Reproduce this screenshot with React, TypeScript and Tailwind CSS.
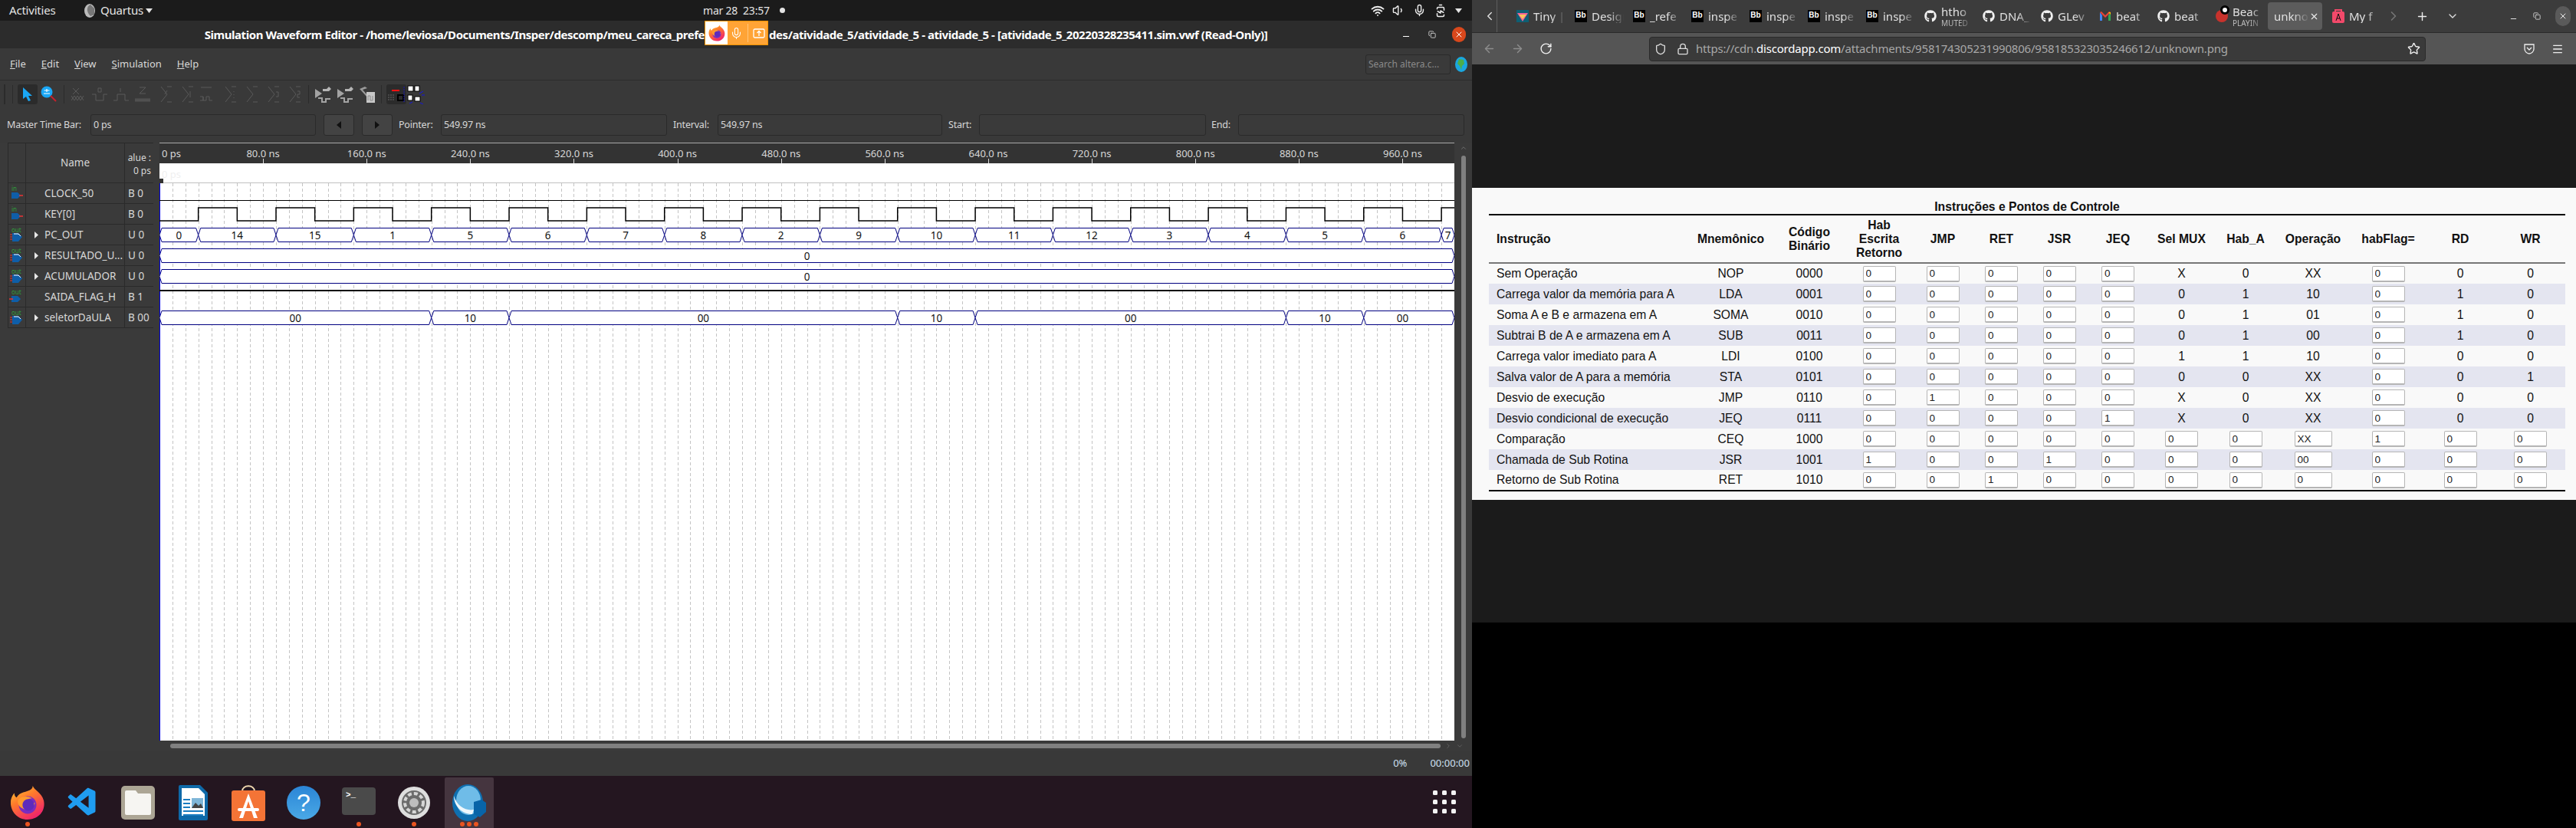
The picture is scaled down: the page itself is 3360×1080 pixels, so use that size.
import React from "react";
import { Wifi, Volume1, Mic, BatteryCharging, Minus, Plus, X, Star, Shield, Lock, Menu, ArrowLeft, ArrowRight, RotateCw, ChevronLeft, ChevronRight, ChevronDown, ChevronUp, Copy } from "lucide-react";
import { FaGithub } from "react-icons/fa";
import { VscVscode } from "react-icons/vsc";

const ui = "font-['Noto_Sans',sans-serif]";

const Firefox = ({ size = 24 }: { size?: number }) => (
  <svg width={size} height={size} viewBox="0 0 48 48">
    <defs>
      <linearGradient id="fx" x1="0" y1="0" x2="0.6" y2="1">
        <stop offset="0" stopColor="#ffd23a" />
        <stop offset="0.45" stopColor="#ff7a2b" />
        <stop offset="1" stopColor="#f0256a" />
      </linearGradient>
    </defs>
    <path d="M31 1c2 6 12 9 15 20 3 14-7 26-22 26C10 47 1 36 1 24c0-6 3-11 5-13 0 3 1 5 3 6 2-4 6-6 9-7 6-2 13-3 13-9z" fill="url(#fx)" />
    <circle cx="24" cy="27" r="12" fill="#7b2cbf" />
    <path d="M11 20c4-5 13-6 19-2-5 0-8 3-8 6 3 2 9 1 12 0-1 6-7 11-14 9-6-2-11-7-9-13z" fill="#ff9a2e" />
    <circle cx="25" cy="27" r="8" fill="#5d2bbd" />
  </svg>
);

// disabled wave buttons of the toolbar
const btnShapes = [
  "M4 4l8 8M12 4l-8 8M2 14l4 6 4-6 4 6 4-6M2 20l4-6 4 6 4-6 4 6",
  "M1 12h5v8h10v-8h5M9 4h4v5h-4z",
  "M1 20h5v-8h10v8h5M10 4v5",
  "M1 18h20M1 21h20M1 19.500h20M7 3h8l-8 8h8",
  "M7 2l8 10-8 10M15 2h6M15 22h6M12 12l3-5",
  "M7 2l8 10-8 10M15 2h6M15 22h6M17 8v8",
  "M3 3h14M2 15h4v5h4v-5h4v5h4M2 20h4v-5",
  "M7 2l8 10-8 10M15 2h6M15 22h6M18 8v1M18 12v1M18 16v1",
  "M7 2l8 10-8 10M15 2h6M15 22h6",
  "M7 2l8 10-8 10M15 2h6M15 22h6M17 9h3v6h-3",
  "M7 2l8 10-8 10M15 2h6M15 22h6M17 8h3v4h-3v4h3",
];

const Sep = ({ x }: { x: string }) => <div className={`w-px h-[24px] bg-[#2b2b2b] ${x}`} />;

const Toolbar = () => (
  <div className="h-[35px] flex items-center bg-[#393939]">
    <div className="ml-[5px] w-[2px] h-[26px] bg-[#2b2b2b]" />
    <Sep x="ml-[9px]" />
    <div className="ml-[6px] w-[26px] h-[26px] bg-[#2b2b2b] rounded-[3px] flex items-center justify-center">
      <svg width="16" height="20" viewBox="0 0 16 20"><path d="M2 1v15l4-3 3 6 3-1-3-6h5z" fill="#1aa7f5" /></svg>
    </div>
    <svg className="ml-[4px]" width="22" height="22" viewBox="0 0 22 22">
      <circle cx="8" cy="8" r="7.500" fill="#1aa7f5" />
      <path d="M4 10h8M8 4v4M4.500 6h7" stroke="#fff" strokeWidth="1.200" />
      <path d="M13 13l7 7" stroke="#c8202c" strokeWidth="2" />
    </svg>
    <Sep x="ml-[8px]" />
    <div className="ml-[7px] flex gap-[4px]">
      {btnShapes.map((d, i) => (
        <svg key={i} width="24" height="24" viewBox="0 0 24 24" fill="none" stroke="#5a5a5a" strokeWidth="1">
          <path d={d} />
        </svg>
      ))}
    </div>
    <Sep x="ml-[7px]" />
    <div className="ml-[6px] flex gap-[5px]">
      {[0, 1].map((i) => (
        <svg key={i} width="24" height="24" viewBox="0 0 24 24">
          <path d="M2 5l9 6-9 6z" fill="#a3a3a3" />
          <path d="M12 5h5l3-3 3 3-3 3h-8z" fill="#b5b5b5" />
          <path d="M6 17h5v5h5v-4h6" fill="none" stroke="#a3a3a3" strokeWidth="2" />
        </svg>
      ))}
      <svg width="24" height="24" viewBox="0 0 24 24">
        <path d="M2 5l7-3 3 2-6 2 8 9-2 1-8-9z" fill="#9a9a9a" />
        <rect x="11" y="9" width="11" height="14" fill="#c8c8c8" />
        <path d="M13 20v-6h3v6h3v-6" fill="none" stroke="#8a8a8a" />
      </svg>
    </div>
    <Sep x="ml-[6px]" />
    <div className="ml-[6px] w-[26px] h-[26px] bg-[#2b2b2b] rounded-[3px] flex items-center justify-center">
      <svg width="24" height="24" viewBox="0 0 24 24">
        <path d="M6 7h10" stroke="#f11" strokeWidth="2" />
        <path d="M1 13h9M1 16h9M1 19h9" stroke="#666" strokeDasharray="2 1" />
        <rect x="14" y="13" width="7" height="7" fill="none" stroke="#000" strokeWidth="2" />
        <path d="M22 2v20" stroke="#1515c0" strokeDasharray="2 1" />
      </svg>
    </div>
    <svg width="24" height="26" viewBox="0 0 24 26">
      <rect x="2" y="2" width="7" height="7" fill="#fff" stroke="#000" />
      <rect x="11" y="2" width="6" height="7" fill="#fff" stroke="#000" />
      <rect x="2" y="14" width="6" height="7" fill="#fff" stroke="#000" />
      <rect x="11" y="16" width="7" height="6" fill="#fff" stroke="#000" />
      <path d="M17 12l5-3M18 24l4 2M4 25l4-2M20 14h4" stroke="#1515e0" />
    </svg>
  </div>
);

const Field = ({ w, text }: { w: string; text?: string }) => (
  <div className={`${w} h-[28px] shrink-0 rounded-[3px] border border-[#2a2a2a] bg-[#3a3a3a] px-[3px] flex items-center text-[#d8d8d8]`}>{text}</div>
);

const Label = ({ w, text }: { w: string; text: string }) => <div className={`${w} shrink-0 text-[#d8d8d8] whitespace-nowrap`}>{text}</div>;

const StepBtn = ({ d, cls }: { d: string; cls: string }) => (
  <div className={`${cls} w-[40px] h-[28px] shrink-0 rounded-[3px] border border-[#2a2a2a] bg-[#434343] flex items-center justify-center`}>
    <svg width="6" height="10" viewBox="0 0 6 10"><path d={d} fill="#111" /></svg>
  </div>
);

const TimeRow = () => (
  <div className="h-[46px] pl-[9px] flex items-center text-[12.5px] tracking-[-0.2px] bg-[#393939]">
    <Label w="w-[109px]" text="Master Time Bar:" />
    <Field w="w-[294px]" text="0 ps" />
    <StepBtn cls="ml-[10px]" d="M6 0v10L0 5z" />
    <StepBtn cls="ml-[10px]" d="M0 0v10l6-5z" />
    <Label w="ml-[8px] w-[55px]" text="Pointer:" />
    <Field w="w-[295px]" text="549.97 ns" />
    <Label w="ml-[8px] w-[58px]" text="Interval:" />
    <Field w="w-[293px]" text="549.97 ns" />
    <Label w="ml-[8px] w-[40px]" text="Start:" />
    <Field w="w-[296px]" />
    <Label w="ml-[7px] w-[35px]" text="End:" />
    <Field w="w-[295px]" />
  </div>
);

const signals = [
  { name: "CLOCK_50", value: "B 0", dir: "in", bus: false },
  { name: "KEY[0]", value: "B 0", dir: "in", bus: false },
  { name: "PC_OUT", value: "U 0", dir: "out", bus: true },
  { name: "RESULTADO_U...", value: "U 0", dir: "out", bus: true },
  { name: "ACUMULADOR", value: "U 0", dir: "out", bus: true },
  { name: "SAIDA_FLAG_H", value: "B 1", dir: "out", bus: false },
  { name: "seletorDaULA", value: "B 00", dir: "out", bus: true },
];

const PinIcon = ({ dir, bus }: { dir: string; bus: boolean }) => (
  <svg width="20" height="24" viewBox="0 0 20 24">
    <text x="3" y="9" fontSize="8" fill="#2f9d3a">{dir}</text>
    {bus ? (
      <>
        <path d="M1 12h3M1 15h3M1 18h3" stroke="#e33" strokeWidth="1" />
        <path d="M4 10h8l5 5-5 6H4z" fill="#0f5ea8" />
        <path d="M6 11h6l3 3" stroke="#fff" fill="none" />
      </>
    ) : (
      <>
        <path d="M3 11h8l4 4-4 4H3z" fill="#0f5ea8" />
        <path d={dir === "in" ? "M13 15h5" : "M0 15h5"} stroke="#e33" strokeWidth="1.500" />
      </>
    )}
  </svg>
);

const SignalList = () => (
  <div className="w-[208px] shrink-0 pl-[10px] pr-[8px] bg-[#3a3a3a] text-[13.5px] text-[#d8d8d8]">
    <div className="h-[53px] flex border-y border-[#2a2a2a]">
      <div className="w-[24px] border-x border-[#2a2a2a]" />
      <div className="w-[129px] flex items-center justify-center border-r border-[#2a2a2a]">Name</div>
      <div className="w-[37px] overflow-hidden text-right pr-[3px] leading-[17px] pt-[10px] whitespace-nowrap text-[12px]">
        <div>alue :</div>
        <div>0 ps</div>
      </div>
    </div>
    {signals.map((s) => (
      <div key={s.name} className="h-[27px] flex items-center border-b border-[#2a2a2a]">
        <div className="w-[24px] h-full flex items-center justify-center border-x border-[#2a2a2a]">
          <PinIcon dir={s.dir} bus={s.bus} />
        </div>
        <div className="w-[129px] h-full flex items-center border-r border-[#2a2a2a] whitespace-nowrap pt-[1px]">
          <div className="w-[24px] flex justify-center pl-[2px]">
            {s.bus && <svg width="5" height="9" viewBox="0 0 5 9"><path d="M0 0v9l5-4.500z" fill="#e8e8e8" /></svg>}
          </div>
          {s.name}
        </div>
        <div className="pl-[4px] whitespace-nowrap pt-[1px]">{s.value}</div>
      </div>
    ))}
  </div>
);

const PX = 1.689;
const tx = (t: number) => t * PX;

const BusSeg = ({ a, b, y, label, cx }: { a: number; b: number; y: number; label?: string; cx?: number }) => {
  const h = 18;
  const x1 = tx(a);
  const x2 = tx(b);
  const n = 3;
  return (
    <>
      <path
        d={`M${x1} ${y + h / 2}L${x1 + n} ${y}H${x2 - n}L${x2} ${y + h / 2}L${x2 - n} ${y + h}H${x1 + n}Z`}
        fill="#fff"
        stroke="#000080"
        strokeWidth="1"
      />
      {label && (
        <text x={tx(cx ?? (a + b) / 2)} y={y + 14} fontSize="13.500" fill="#111" textAnchor="middle">
          {label}
        </text>
      )}
    </>
  );
};

const pcValues = ["0", "14", "15", "1", "5", "6", "7", "8", "2", "9", "10", "11", "12", "3", "4", "5", "6", "7"];
const selSegs: [number, number, string][] = [
  [0, 210, "00"],
  [210, 270, "10"],
  [270, 570, "00"],
  [570, 630, "10"],
  [630, 870, "00"],
  [870, 930, "10"],
  [930, 1000, "00"],
];

const keyPath = () => {
  let d = `M0 102`;
  for (let t = 30; t < 1000; t += 60) {
    d += `H${tx(t)}V85`;
    d += t + 30 < 1000 ? `H${tx(t + 30)}V102` : `H1689`;
  }
  return d;
};

const WaveChart = () => {
  const grid = Array.from({ length: 99 }, (_, i) => (i + 1) * 10);
  const ticks = Array.from({ length: 12 }, (_, i) => (i + 1) * 80);
  return (
    <svg width="1689" height="780" viewBox="0 0 1689 780" className="shrink-0 block">
      <rect width="1689" height="27" fill="#333" />
      <path d="M0 0.500H1689" stroke="#a8a8a8" />
      <rect y="27" width="1689" height="753" fill="#fff" />
      <text x="3" y="19" fontSize="13" fill="#d8d8d8">0 ps</text>
      <text x="3" y="46" fontSize="13" fill="#f0f0f0">0 ps</text>
      {ticks.map((t) => (
        <g key={t}>
          <path d={`M${Math.round(tx(t)) + 0.5} 21V27`} stroke="#ddd" />
          <text x={tx(t)} y="19" fontSize="13" fill="#d8d8d8" textAnchor="middle">{t}.0 ns</text>
        </g>
      ))}
      <path d="M0 52.500H1689" stroke="#c0c0c0" />
      {grid.map((t) => (
        <path key={t} d={`M${Math.round(tx(t)) + 0.5} 53V780`} stroke="#c4c4c4" strokeDasharray="4 3" />
      ))}
      <path d="M0.500 53V780" stroke="#0000e0" strokeWidth="1" />
      <rect x="0" y="47" width="5" height="6" fill="#333" />
      <path d="M0 75.500H1689" stroke="#000" />
      <path d={keyPath()} stroke="#000" strokeWidth="1.500" fill="none" />
      {pcValues.map((v, i) => {
        const a = i === 0 ? 0 : 30 + (i - 1) * 60;
        const b = i === 0 ? 30 : Math.min(a + 60, 1000);
        return <BusSeg key={i} a={a} b={b} y={111.500} label={v} />;
      })}
      <BusSeg a={0} b={1000} y={138.500} label="0" cx={500} />
      <BusSeg a={0} b={1000} y={165.500} label="0" cx={500} />
      <rect y="192" width="1689" height="2" fill="#000" />
      {selSegs.map(([a, b, v]) => (
        <BusSeg key={a} a={a} b={b} y={219.500} label={v} cx={b === 1000 ? 960 : undefined} />
      ))}
    </svg>
  );
};

const WaveArea = () => (
  <div className="h-[780px] flex bg-[#3a3a3a]">
    <SignalList />
    <WaveChart />
    <div className="flex-1 relative flex flex-col items-center">
      <ChevronUp size={10} color="#777" className="mt-[2px]" />
      <div className="w-[6px] h-[760px] mt-[5px] bg-[#808080] rounded-[3px]" />
    </div>
  </div>
);

const QuartusWindow = () => (
  <div className={`flex-1 flex flex-col bg-[#393939] ${ui}`}>
    <div className="h-[36px] flex items-center justify-center relative bg-[#2c2c2c] text-white text-[15px] font-bold tracking-[-0.45px] whitespace-nowrap">
      <span className="pr-[84px]">Simulation Waveform Editor - /home/leviosa/Documents/Insper/descomp/meu_careca_prefe</span>
      <span>des/atividade_5/atividade_5 - atividade_5 - [atividade_5_20220328235411.sim.vwf (Read-Only)]</span>
      <div className="absolute right-[82px] top-[20px] w-[8px] h-px bg-white" />
      <Copy size={10} color="#ddd" className="absolute right-[47px] top-[13px]" />
      <div className="absolute right-[8px] top-[8px] w-[18px] h-[20px] rounded-full bg-[#d9481c] flex items-center justify-center">
        <X size={12} color="#fff" />
      </div>
    </div>
    <div className="h-[42px] flex items-center pl-[13px] pr-[6px] gap-[20px] text-[13px] text-[#d8d8d8] border-b border-[#2c2c2c]">
      {["File", "Edit", "View", "Simulation", "Help"].map((m) => (
        <span key={m}>
          <span className="underline">{m[0]}</span>
          {m.slice(1)}
        </span>
      ))}
      <div className="ml-auto w-[111px] h-[26px] rounded-[3px] border border-[#2a2a2a] bg-[#3a3a3a] flex items-center px-[3px] text-[#8a8a8a] text-[12px] whitespace-nowrap">
        Search altera.c...
      </div>
      <svg className="-ml-[14px]" width="16" height="20" viewBox="0 0 16 20">
        <ellipse cx="8" cy="10" rx="8" ry="10" fill="#1aa7e0" />
        <path d="M5 3l6 1 1 5-3 3-1 5-2-5-3-3z" fill="#4cae4c" />
      </svg>
    </div>
    <Toolbar />
    <TimeRow />
    <WaveArea />
    <div className="h-[14px] flex items-center pl-[222px] bg-[#3a3a3a]">
      <div className="w-[1657px] h-[6px] rounded-[3px] bg-[#808080]" />
      <ChevronRight size={10} color="#666" className="ml-[5px]" />
      <ChevronDown size={10} color="#666" className="ml-[5px]" />
    </div>
    <div className="h-[32px] flex items-center justify-end pr-[3px] text-[13px] text-[#cfe0f2]">
      <span className="mr-[30px]">0%</span>
      <span>00:00:00</span>
    </div>
  </div>
);

const TopBar = () => (
  <div className={`h-[27px] flex items-center pl-[12px] bg-[#1b1b1b] text-[#e4e4e4] text-[15px] tracking-[-0.2px] relative ${ui}`}>
    <span className="w-[63px] whitespace-nowrap">Activities</span>
    <svg className="ml-[34px]" width="16" height="20" viewBox="0 0 16 20">
      <ellipse cx="8" cy="10" rx="7" ry="9" fill="#bbb" />
      <path d="M9 2c-5 2-6 9 0 15l5-2V7z" fill="#777" />
    </svg>
    <span className="ml-[6px] w-[54px] whitespace-nowrap">Quartus</span>
    <svg className="ml-[5px]" width="9" height="6" viewBox="0 0 9 6"><path d="M0 0h9L4.500 6z" fill="#e4e4e4" /></svg>
    <span className="ml-[718px] w-[88px] whitespace-nowrap text-[14px]">mar 28&nbsp;&nbsp;23:57</span>
    <div className="ml-[12px] w-[7px] h-[7px] rounded-full bg-[#e4e4e4]" />
    <div className="ml-auto flex items-center gap-[10px] pr-[13px]">
      <Wifi size={18} color="#eee" strokeWidth={2.500} />
      <Volume1 size={17} color="#eee" />
      <Mic size={17} color="#eee" />
      <BatteryCharging size={18} color="#eee" className="-rotate-90" />
      <svg width="9" height="6" viewBox="0 0 9 6"><path d="M0 0h9L4.500 6z" fill="#e4e4e4" /></svg>
    </div>
  </div>
);

const Bb = () => (
  <div className="w-[16px] h-[16px] bg-black text-white text-[10px] font-bold leading-[14px] text-center shrink-0 font-['Liberation_Sans',sans-serif]">Bb</div>
);
const Gh = () => <FaGithub size={16} color="#f0f0f0" className="shrink-0" />;

type Tab = { icon: React.ReactNode; text: string; sub?: string; active?: boolean };
const tabs: Tab[] = [
  {
    icon: (
      <svg width="16" height="16" viewBox="0 0 16 16" className="shrink-0">
        <rect width="16" height="16" fill="#0d5f74" />
        <path d="M1 4h14l-7 11z" fill="#f0609a" />
        <path d="M3 6h10l-5 6z" fill="#f7c65a" />
      </svg>
    ),
    text: "Tiny |",
  },
  { icon: <Bb />, text: "Design" },
  { icon: <Bb />, text: "_refe" },
  { icon: <Bb />, text: "inspe" },
  { icon: <Bb />, text: "inspe" },
  { icon: <Bb />, text: "inspe" },
  { icon: <Bb />, text: "inspe" },
  { icon: <Gh />, text: "htho", sub: "MUTED" },
  { icon: <Gh />, text: "DNA_" },
  { icon: <Gh />, text: "GLev" },
  {
    icon: (
      <svg width="16" height="16" viewBox="0 0 16 16" className="shrink-0">
        <path d="M1 3v11h3V7z" fill="#4285f4" />
        <path d="M15 3v11h-3V7z" fill="#34a853" />
        <path d="M1 3l2-1 5 5 5-5 2 1-7 7z" fill="#ea4335" />
        <path d="M12 3l3 0v3z" fill="#fbbc04" />
      </svg>
    ),
    text: "beat",
  },
  { icon: <Gh />, text: "beat" },
  {
    icon: (
      <div className="relative w-[16px] h-[16px] shrink-0">
        <div className="w-[16px] h-[16px] rounded-full bg-[#c8322c]" />
        <div className="absolute -top-[6px] left-[6px] w-[12px] h-[12px] rounded-full bg-white border-[3px] border-black" />
      </div>
    ),
    text: "Beac",
    sub: "PLAYIN",
  },
  { icon: null, text: "unkno", active: true },
  {
    icon: (
      <svg width="16" height="18" viewBox="0 0 16 18" className="shrink-0">
        <rect y="3" width="16" height="15" rx="2" fill="#f2496a" />
        <path d="M4 3V1h8v2" fill="none" stroke="#f2496a" strokeWidth="2" />
        <path d="M5 15l3-9 3 9M6 12h4" stroke="#111" fill="none" />
      </svg>
    ),
    text: "My f",
  },
];

const fade = "[mask-image:linear-gradient(90deg,#000_55%,transparent)]";

const TabStrip = () => (
  <div className="h-[43px] flex items-center bg-[#3c3c3c] border-b border-[#2b2b2b] text-[#e0e0e0] text-[15px] relative">
    <div className="w-[32px] h-full flex items-center justify-end">
      <ChevronLeft size={18} color="#ddd" />
    </div>
    <div className="w-[1px] h-full bg-[#5e5e5e]" />
    <div className="w-[17px]" />
    {tabs.map((t, i) =>
      t.active ? (
        <div key={i} className="w-[71px] mr-[5px] h-[36px] rounded-[4px] bg-[#5c5c5c] flex items-center pl-[8px] shrink-0">
          <span className={`w-[46px] overflow-hidden whitespace-nowrap ${fade}`}>{t.text}</span>
          <X size={13} color="#eee" />
        </div>
      ) : (
        <div key={i} className="w-[76px] pl-[8px] flex items-center gap-[6px] shrink-0">
          {t.icon}
          <div className="w-[42px] overflow-hidden whitespace-nowrap">
            <div className={`leading-[18px] ${fade}`}>{t.text}</div>
            {t.sub && <div className={`text-[10px] leading-[13px] text-[#bbb] ${fade}`}>{t.sub}</div>}
          </div>
        </div>
      )
    )}
    <ChevronRight size={20} color="#777" className="ml-[2px]" />
    <Plus size={17} color="#eee" className="ml-[19px]" />
    <ChevronDown size={16} color="#ddd" className="ml-[23px]" />
    <Minus size={11} color="#eee" className="ml-[66px] mt-[6px]" />
    <Copy size={10} color="#ddd" className="ml-[20px]" />
    <div className="ml-[19px] w-[20px] h-[26px] rounded-full bg-[#5a5a5a] flex items-center justify-center">
      <X size={12} color="#eee" />
    </div>
  </div>
);

const NavBar = () => (
  <div className="h-[41px] flex items-center bg-[#555] relative">
    <ArrowLeft size={17} color="#8d8d8d" className="ml-[14px]" />
    <ArrowRight size={17} color="#8d8d8d" className="ml-[20px]" />
    <RotateCw size={17} color="#f0f0f0" className="ml-[20px]" />
    <div className="ml-[126px] w-[1013px] h-[32px] rounded-[4px] bg-[#3a3a3a] border border-[#2b2b2b] flex items-center text-[15px] tracking-[-0.2px] text-[#a8a8a8] whitespace-nowrap">
      <Shield size={16} color="#ddd" className="ml-[6px]" />
      <Lock size={16} color="#ddd" className="ml-[13px]" />
      <span className="ml-[9px]">
        https://cdn.<span className="text-white">discordapp.com</span>/attachments/958174305231990806/958185323035246612/unknown.png
      </span>
      <Star size={17} color="#eee" className="ml-auto mr-[6px]" />
    </div>
    <svg className="ml-[127px]" width="16" height="16" viewBox="0 0 16 16" fill="none" stroke="#eee" strokeWidth="1.300">
      <path d="M2 2h12v6c0 3-3 6-6 6S2 11 2 8z" />
      <path d="M5 6l3 3 3-3" />
    </svg>
    <Menu size={16} color="#eee" className="ml-[21px]" />
  </div>
);

// name, mnemonic, code, then the control columns; the last three rows use inputs for all of them
const rows: string[][] = [
  ["Sem Operação", "NOP", "0000", "0", "0", "0", "0", "0", "X", "0", "XX", "0", "0", "0"],
  ["Carrega valor da memória para A", "LDA", "0001", "0", "0", "0", "0", "0", "0", "1", "10", "0", "1", "0"],
  ["Soma A e B e armazena em A", "SOMA", "0010", "0", "0", "0", "0", "0", "0", "1", "01", "0", "1", "0"],
  ["Subtrai B de A e armazena em A", "SUB", "0011", "0", "0", "0", "0", "0", "0", "1", "00", "0", "1", "0"],
  ["Carrega valor imediato para A", "LDI", "0100", "0", "0", "0", "0", "0", "1", "1", "10", "0", "0", "0"],
  ["Salva valor de A para a memória", "STA", "0101", "0", "0", "0", "0", "0", "0", "0", "XX", "0", "0", "1"],
  ["Desvio de execução", "JMP", "0110", "0", "1", "0", "0", "0", "X", "0", "XX", "0", "0", "0"],
  ["Desvio condicional de execução", "JEQ", "0111", "0", "0", "0", "0", "1", "X", "0", "XX", "0", "0", "0"],
  ["Comparação", "CEQ", "1000", "0", "0", "0", "0", "0", "0", "0", "XX", "1", "0", "0"],
  ["Chamada de Sub Rotina", "JSR", "1001", "1", "0", "0", "1", "0", "0", "0", "00", "0", "0", "0"],
  ["Retorno de Sub Rotina", "RET", "1010", "0", "0", "1", "0", "0", "0", "0", "0", "0", "0", "0"],
];

const headers = ["Instrução", "Mnemônico", "Código Binário", "Hab Escrita Retorno", "JMP", "RET", "JSR", "JEQ", "Sel MUX", "Hab_A", "Operação", "habFlag=", "RD", "WR"];
const colWidths = ["w-[261px]", "w-[109px]", "w-[96px]", "w-[86px]", "w-[80px]", "w-[73px]", "w-[78px]", "w-[75px]", "w-[91px]", "w-[76px]", "w-[100px]", "w-[96px]", "w-[92px]", "w-[91px]"];
const alwaysInput = [3, 4, 5, 6, 7, 11];

const Cell = ({ value, wide }: { value: string; wide: boolean }) => (
  <input
    readOnly
    value={value}
    className={`${wide ? "w-[49px]" : "w-[43px]"} h-[21px] align-middle bg-white rounded-[2px] border border-[#b5b5b5] border-b-2 px-[3px] text-[13.500px] text-[#222] outline-none`}
  />
);

const ControlTable = () => (
  <div className="mt-[161px] h-[407px] bg-[#f9f9f9] pl-[22px] pr-[14px] font-['Liberation_Sans',Arial,sans-serif] text-[15.7px] text-[#111]">
    <div className="h-[34px] pt-[16px] text-center font-bold leading-[18px]">Instruções e Pontos de Controle</div>
    <table className="w-[1404px] table-fixed border-collapse border-t-2 border-b-2 border-black">
      <colgroup>
        {colWidths.map((w, i) => (
          <col key={i} className={w} />
        ))}
      </colgroup>
      <thead>
        <tr className="h-[63px] border-b-2 border-[#777]">
          {headers.map((h, i) => (
            <th key={h} className={`font-bold leading-[18px] ${i === 0 ? "text-left pl-[10px]" : "text-center"} ${i === 2 ? "px-[20px]" : i === 3 ? "px-[12px]" : ""}`}>
              {h}
            </th>
          ))}
        </tr>
      </thead>
      <tbody>
        {rows.map((r, ri) => (
          <tr key={r[1]} className={`h-[27px] ${ri % 2 ? "bg-[#e4e5f0]" : "bg-[#f9f9f9]"}`}>
            {r.map((v, ci) => (
              <td key={ci} className={`p-0 leading-[18px] ${ci === 0 ? "text-left pl-[10px]" : "text-center"}`}>
                {ci > 2 && (alwaysInput.includes(ci) || ri >= 8) ? <Cell value={v} wide={ci === 10} /> : v}
              </td>
            ))}
          </tr>
        ))}
      </tbody>
    </table>
  </div>
);

const DockIcon = ({ children, dots = 0, active }: { children: React.ReactNode; dots?: number; active?: boolean }) => (
  <div className="w-[72px] h-full flex items-end justify-center">
    <div className={`relative w-[64px] h-[66px] rounded-t-[2px] flex items-center justify-center ${active ? "bg-[#45353f]" : ""}`}>
      {children}
      <div className="absolute bottom-[2px] left-0 right-0 flex justify-center gap-[3px]">
        {Array.from({ length: dots }).map((_, i) => (
          <div key={i} className="w-[6px] h-[6px] rounded-full bg-[#e95420]" />
        ))}
      </div>
    </div>
  </div>
);

const Dock = () => (
  <div className="h-[68px] flex bg-[#241620] relative">
    <DockIcon dots={1}><Firefox size={46} /></DockIcon>
    <DockIcon><VscVscode size={44} color="#1f9cf0" /></DockIcon>
    <DockIcon>
      <div className="w-[44px] h-[44px] rounded-[5px] bg-[#aca595] flex items-center justify-center">
        <svg width="34" height="32" viewBox="0 0 34 32"><path d="M2 0h12l3 4h15a2 2 0 0 1 2 2v24a2 2 0 0 1-2 2H2a2 2 0 0 1-2-2V2a2 2 0 0 1 2-2z" fill="#f6f5f2" /></svg>
      </div>
    </DockIcon>
    <DockIcon>
      <svg width="38" height="46" viewBox="0 0 38 46">
        <path d="M2 0h26l10 10v34a2 2 0 0 1-2 2H2a2 2 0 0 1-2-2V2a2 2 0 0 1 2-2z" fill="#0e69a8" />
        <path d="M4 4h22l8 8v28H4z" fill="#fff" />
        <path d="M6 18h9v2H6zM6 23h9v2H6zM6 28h9v2H6zM6 33h26v2H6zM6 38h26v2H6z" fill="#1b7cc0" />
        <rect x="17" y="17" width="15" height="13" fill="#7fb6d8" />
        <path d="M17 30l5-7 4 4 3-3 3 6z" fill="#444" />
      </svg>
    </DockIcon>
    <DockIcon>
      <svg width="44" height="48" viewBox="0 0 44 48">
        <path d="M14 9c0-9 16-9 16 0" fill="none" stroke="#f0d9b0" strokeWidth="2" />
        <rect y="8" width="44" height="40" rx="3" fill="#f47436" />
        <path d="M22 12L10 44h5l7-22 7 22h5z" fill="#fff" />
        <rect x="8" y="31" width="28" height="4" rx="2" fill="#fff" />
      </svg>
    </DockIcon>
    <DockIcon>
      <div className="w-[44px] h-[44px] rounded-full bg-gradient-to-b from-[#2b85d6] to-[#4aa9e6] text-white text-[32px] leading-[44px] text-center font-['Liberation_Sans',sans-serif]">?</div>
    </DockIcon>
    <DockIcon dots={1}>
      <div className="w-[44px] h-[36px] mt-[-4px] rounded-[4px] bg-[#4a4a4a] text-white text-[11px] font-bold pl-[5px] pt-[2px] font-['Liberation_Mono',monospace]">&gt;_</div>
    </DockIcon>
    <DockIcon dots={1}>
      <svg width="44" height="44" viewBox="0 0 44 44">
        <circle cx="22" cy="22" r="21" fill="#dedede" />
        <circle cx="22" cy="22" r="16" fill="#6b6b6b" />
        <circle cx="22" cy="22" r="12" fill="none" stroke="#d6d6d6" strokeWidth="4" strokeDasharray="5 3" />
        <circle cx="22" cy="22" r="6" fill="#bdbdbd" />
      </svg>
    </DockIcon>
    <DockIcon dots={3} active>
      <svg width="46" height="50" viewBox="0 0 46 50">
        <ellipse cx="21" cy="25" rx="20" ry="24" fill="#0f6fb0" />
        <ellipse cx="22" cy="22" rx="16" ry="19" fill="#6fbce8" />
        <path d="M3 16c4 14 16 20 26 18l-2 6C14 40 3 30 3 16z" fill="#eef7fc" />
        <path d="M29 24l10-3 6 4v12l-8 7-8-4z" fill="#0864a8" />
      </svg>
    </DockIcon>
    <div className="absolute right-[21px] top-[19px] grid grid-cols-3 gap-[6px]">
      {Array.from({ length: 9 }).map((_, i) => (
        <div key={i} className="w-[6px] h-[6px] rounded-[1.500px] bg-[#f2f2f2]" />
      ))}
    </div>
  </div>
);

const SharingIndicator = () => (
  <div className="absolute left-[919px] top-[27px] w-[83px] h-[32px] flex bg-[#ffa436] border border-[#ff9400]">
    <div className="w-[29px] bg-white flex items-center justify-center">
      <Firefox size={22} />
    </div>
    <div className="flex-1 flex items-center justify-center">
      <Mic size={17} color="#fff" strokeWidth={1.500} />
      <div className="w-px h-[24px] bg-[#ffc77e] mx-[6px]" />
      <svg width="16" height="13" viewBox="0 0 16 13" fill="none" stroke="#fff" strokeWidth="1.300">
        <rect x="1" y="1" width="14" height="11" rx="1.500" />
        <path d="M8 10V4M5.500 6L8 3.500 10.500 6" />
      </svg>
    </div>
  </div>
);

export default function App() {
  return (
    <div className="w-[3360px] h-[1080px] flex bg-black overflow-hidden relative">
      <div className="w-[1920px] flex flex-col shrink-0">
        <TopBar />
        <QuartusWindow />
        <Dock />
      </div>
      <div className={`w-[1440px] flex flex-col ${ui}`}>
        <TabStrip />
        <NavBar />
        <div className="h-[728px] bg-[#1b1b1b] overflow-hidden">
          <ControlTable />
        </div>
      </div>
      <SharingIndicator />
    </div>
  );
}
